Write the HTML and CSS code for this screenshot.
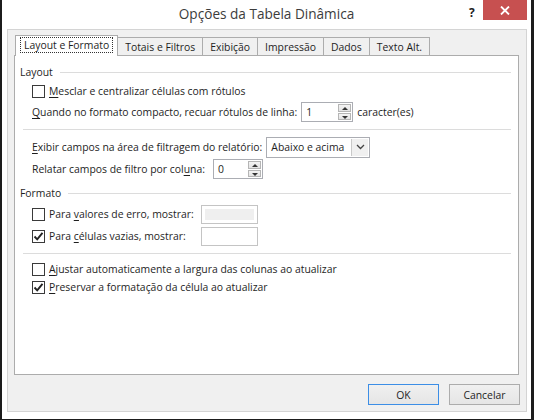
FILE: index.html
```html
<!DOCTYPE html>
<html lang="pt">

<head>
    <meta charset="UTF-8">
    <title>Opções da Tabela Dinâmica</title>
    <link rel="stylesheet" href="styles.css">
</head>

<body>
    <div class="window">
        <div class="titlebar">
            <div class="title">Opções da Tabela Dinâmica</div>
            <div class="help">?</div>
            <div class="close">
                <svg width="10" height="9" viewBox="0 0 10 9">
                    <path d="M1 0.5 L9 8.5 M9 0.5 L1 8.5" stroke="#fff" stroke-width="1.8" fill="none" />
                </svg>
            </div>
        </div>

        <div class="client">
            <div class="tabs">
                <div class="tab active"><span class="focus">Layout e Formato</span></div>
                <div class="tab">Totais e Filtros</div>
                <div class="tab">Exibição</div>
                <div class="tab">Impressão</div>
                <div class="tab">Dados</div>
                <div class="tab">Texto Alt.</div>
            </div>

            <div class="panel">
                <div class="legend legend-first"><span>Layout</span><div class="line"></div></div>
                <div class="row row-first">
                    <span class="cb"></span>
                    <span><u>M</u>esclar e centralizar células com rótulos</span>
                </div>
                <div class="row">
                    <span><u>Q</u>uando no formato compacto, recuar rótulos de linha:</span>
                    <div class="spin spin-indent">
                        <span class="val">1</span>
                        <div class="arrows">
                            <span class="arr up"></span>
                            <span class="arr down"></span>
                        </div>
                    </div>
                    <span>caracter(es)</span>
                </div>
                <div class="sep"></div>
                <div class="row">
                    <span><u>E</u>xibir campos na área de filtragem do relatório:</span>
                    <div class="select">
                        <span class="val">Abaixo e acima</span>
                        <div class="drop">
                            <svg width="9" height="6" viewBox="0 0 9 6">
                                <path d="M1 1 L4.5 4.5 L8 1" stroke="#444" stroke-width="1.3" fill="none" />
                            </svg>
                        </div>
                    </div>
                </div>
                <div class="row">
                    <span>Relatar campos de filtro por col<u>u</u>na:</span>
                    <div class="spin spin-cols">
                        <span class="val">0</span>
                        <div class="arrows">
                            <span class="arr up"></span>
                            <span class="arr down"></span>
                        </div>
                    </div>
                </div>

                <div class="legend legend-second"><span>Formato</span><div class="line"></div></div>
                <div class="row">
                    <span class="cb"></span>
                    <span class="fixed">Para <u>v</u>alores de erro, mostrar:</span>
                    <div class="textbox disabled"><div class="fill"></div></div>
                </div>
                <div class="row">
                    <span class="cb checked">
                        <svg width="11" height="11" viewBox="0 0 11 11">
                            <path d="M1.5 5.5 L4.2 8.3 L9.5 1.8" stroke="#222" stroke-width="1.9" fill="none" />
                        </svg>
                    </span>
                    <span class="fixed">Para <u>c</u>élulas vazias, mostrar:</span>
                    <div class="textbox"></div>
                </div>
                <div class="sep"></div>
                <div class="row row-short">
                    <span class="cb"></span>
                    <span><u>A</u>justar automaticamente a largura das colunas ao atualizar</span>
                </div>
                <div class="row row-short">
                    <span class="cb checked">
                        <svg width="11" height="11" viewBox="0 0 11 11">
                            <path d="M1.5 5.5 L4.2 8.3 L9.5 1.8" stroke="#222" stroke-width="1.9" fill="none" />
                        </svg>
                    </span>
                    <span><u>P</u>reservar a formatação da célula ao atualizar</span>
                </div>
            </div>

            <div class="buttons">
                <div class="btn default">OK</div>
                <div class="btn">Cancelar</div>
            </div>
        </div>
    </div>
</body>

</html>
```

FILE: styles.css
```css
* {
    margin: 0;
    padding: 0;
    box-sizing: border-box;
}

body {
    font-family: "Open Sans", "Noto Sans", sans-serif;
    font-size: 10.4px;
    color: #1e1e1e;
    background: #fff;
}

.window {
    width: 534px;
    height: 420px;
    background: #fff;
    border-left: 2px solid #1c1c1c;
    border-right: 3px solid #1c1c1c;
    border-bottom: 1px solid #1c1c1c;
    display: flex;
    flex-direction: column;
}

/* title bar */
.titlebar {
    position: relative;
    height: 29px;
    display: flex;
    justify-content: center;
    align-items: center;
}

.title {
    font-size: 13.6px;
    color: #3c3c3c;
    padding-bottom: 2px;
}

.help {
    position: absolute;
    left: 467px;
    top: 4px;
    font-weight: bold;
    font-size: 12px;
    color: #222;
}

.close {
    position: absolute;
    right: 4px;
    top: 0;
    width: 44px;
    height: 20px;
    background: #c75050;
    display: flex;
    align-items: center;
    justify-content: center;
}

/* client */
.client {
    flex: 1;
    margin: 0 4px 7px 5px;
    border: 1px solid #d4d4d4;
    background: #f0f0f0;
    padding: 5px 7px 0 6px;
}

.tabs {
    display: flex;
    align-items: flex-end;
    height: 20px;
    padding-left: 1px;
}

.tab {
    height: 18px;
    padding: 0 7px;
    border: 1px solid #acacac;
    border-bottom: none;
    margin-left: -1px;
    background: #f0f0f0;
    display: flex;
    align-items: center;
    white-space: nowrap;
}

.tab:first-child {
    margin-left: 0;
}

.tab.active {
    position: relative;
    z-index: 1;
    height: 21px;
    margin-bottom: -1px;
    background: #fff;
    padding: 0 4px 2px 4px;
}

.focus {
    border: 1px dotted #333;
    padding: 0 3px;
    line-height: 14px;
}

.panel {
    height: 320px;
    border: 1px solid #acacac;
    background: #fff;
    padding: 0 7px 0 5px;
}

.legend {
    display: flex;
    align-items: center;
    height: 16px;
    gap: 7px;
}

.legend-first {
    margin-top: 8px;
    margin-bottom: 1px;
}

.legend-second {
    margin-top: 5px;
    margin-bottom: 2px;
}

.legend .line {
    flex: 1;
    height: 1px;
    background: #dcdcdc;
}

.sep {
    height: 1px;
    background: #dcdcdc;
    margin: 6px 0 6px 3px;
}

.row {
    display: flex;
    align-items: center;
    height: 22px;
    padding-left: 12px;
    gap: 4px;
    white-space: nowrap;
}

.row-first {
    height: 20px;
}

.row-short {
    height: 18px;
}

.cb {
    width: 13px;
    height: 13px;
    border: 1px solid #3a3a3a;
    background: #fff;
    display: flex;
    align-items: center;
    justify-content: center;
    flex-shrink: 0;
}

.fixed {
    width: 148px;
}

u {
    text-decoration-thickness: 1px;
    text-underline-offset: 2px;
}

/* spin boxes */
.spin {
    height: 20px;
    border: 1px solid #abadb3;
    display: flex;
    align-items: stretch;
    background: #fff;
}

.spin .val,
.select .val {
    flex: 1;
    padding-left: 4px;
    display: flex;
    align-items: center;
}

.spin-indent {
    width: 52px;
}

.spin-cols {
    width: 50px;
    margin-left: 4px;
}

.arrows {
    width: 15px;
    display: flex;
    flex-direction: column;
    padding: 1px;
    gap: 1px;
}

.arr {
    flex: 1;
    border: 1px solid #b5b5b5;
    background: linear-gradient(#f4f4f4, #e3e3e3);
    position: relative;
}

.arr::after {
    content: "";
    position: absolute;
    left: 3px;
    top: 2px;
    border-left: 3px solid transparent;
    border-right: 3px solid transparent;
}

.up::after {
    border-bottom: 3px solid #333;
}

.down::after {
    border-top: 3px solid #333;
}

/* combo */
.select {
    width: 104px;
    height: 21px;
    border: 1px solid #abadb3;
    display: flex;
    align-items: stretch;
    background: #fff;
}

.drop {
    width: 17px;
    border-left: 1px solid #c9c9c9;
    margin: 1px;
    background: #f0f0f0;
    display: flex;
    align-items: center;
    justify-content: center;
}

/* text boxes */
.textbox {
    width: 57px;
    height: 19px;
    border: 1px solid #c4c4c4;
    background: #fff;
}

.textbox.disabled {
    padding: 3px;
}

.textbox .fill {
    height: 100%;
    background: #efefef;
}

/* buttons */
.buttons {
    display: flex;
    justify-content: flex-end;
    gap: 10px;
    margin-top: 9px;
    margin-right: -1px;
}

.btn {
    width: 71px;
    height: 21px;
    border: 1px solid #acacac;
    background: linear-gradient(#f0f0f0, #e5e5e5);
    display: flex;
    align-items: center;
    justify-content: center;
}

.btn.default {
    border-color: #3c8ee6;
}
```
